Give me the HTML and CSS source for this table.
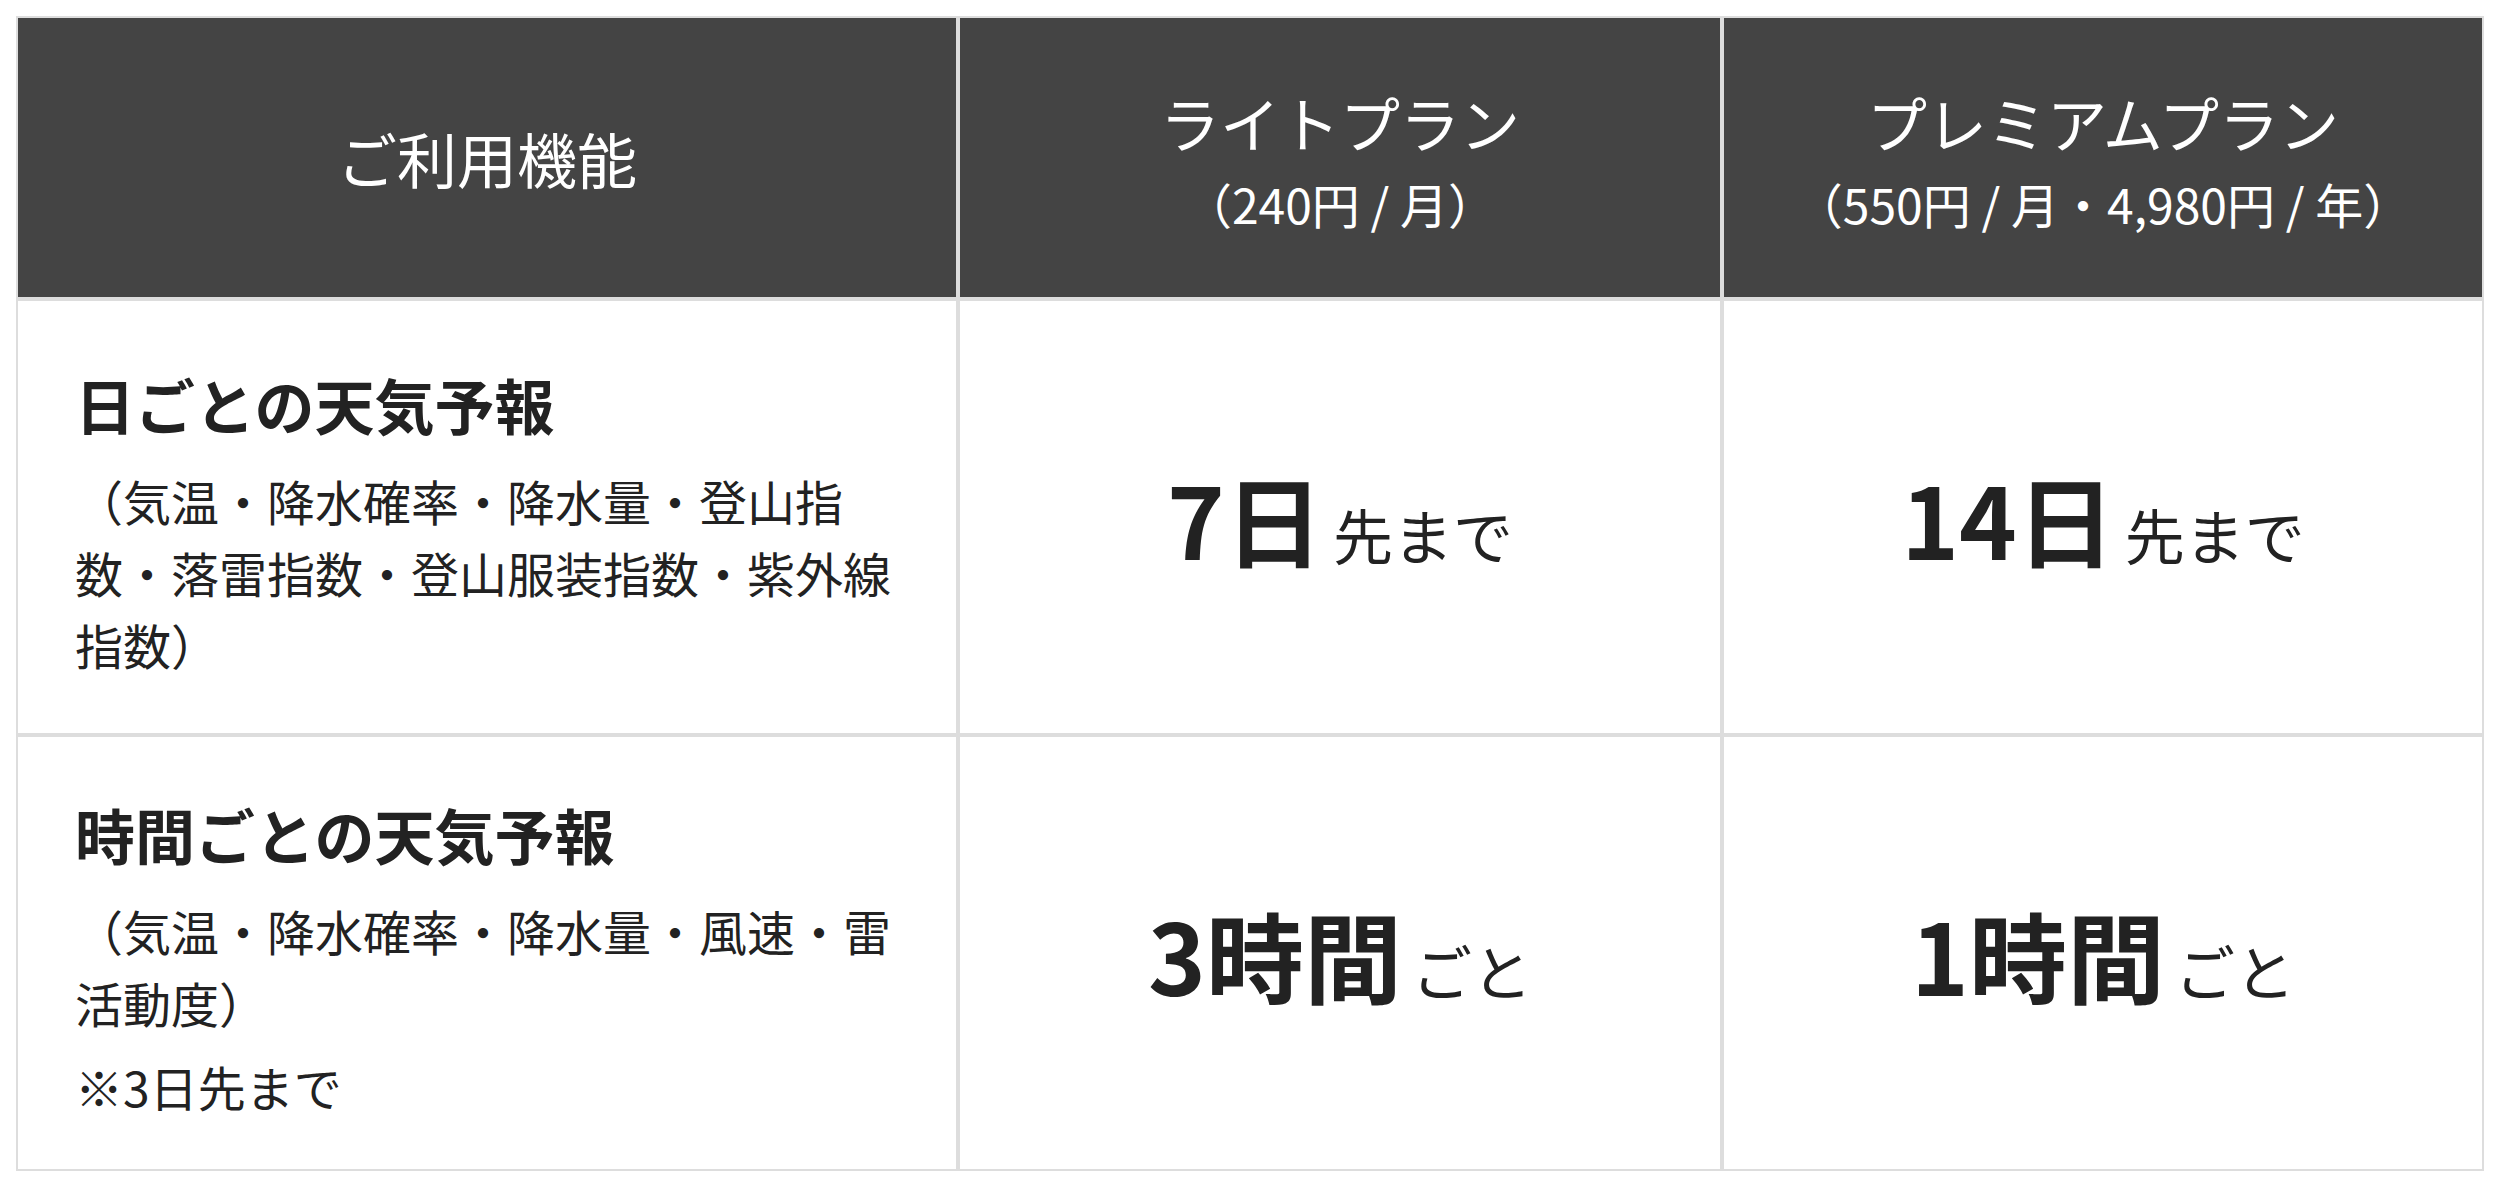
FILE: index.html
```html
<!DOCTYPE html>
<html lang="ja">
<head>
<meta charset="utf-8">
<title>プラン比較</title>
<link rel="stylesheet" href="styles.css">
</head>
<body>
<div class="page">
  <div class="plan-table">
    <div class="cell head">
      <div class="head-title">ご利用機能</div>
    </div>
    <div class="cell head">
      <div class="head-title">ライトプラン</div>
      <div class="head-price">（240円 / 月）</div>
    </div>
    <div class="cell head">
      <div class="head-title">プレミアムプラン</div>
      <div class="head-price">（550円 / 月・4,980円 / 年）</div>
    </div>

    <div class="cell feature">
      <div class="feature-title">日ごとの天気予報</div>
      <p class="feature-desc">（気温・降水確率・降水量・登山指数・落雷指数・登山服装指数・紫外線指数）</p>
    </div>
    <div class="cell value">
      <span class="value-big">7日</span><span class="value-small">先まで</span>
    </div>
    <div class="cell value">
      <span class="value-big">14日</span><span class="value-small">先まで</span>
    </div>

    <div class="cell feature">
      <div class="feature-title">時間ごとの天気予報</div>
      <p class="feature-desc">（気温・降水確率・降水量・風速・雷活動度）</p>
      <p class="feature-note">※3日先まで</p>
    </div>
    <div class="cell value">
      <span class="value-big">3時間</span><span class="value-small">ごと</span>
    </div>
    <div class="cell value">
      <span class="value-big">1時間</span><span class="value-small">ごと</span>
    </div>
  </div>
</div>
</body>
</html>
```

FILE: styles.css
```css
html, body {
  margin: 0;
  padding: 0;
  background: #ffffff;
}

body {
  font-family: "Noto Sans CJK JP", "Noto Sans", sans-serif;
  color: #222222;
}

.page {
  padding: 16px;
}

.plan-table {
  display: grid;
  grid-template-columns: 942px 764px 762px;
  grid-template-rows: 283px 436px 436px;
}

.cell {
  box-sizing: border-box;
  border: 2px solid #dddddd;
}

.head {
  background: #444444;
  color: #ffffff;
  display: flex;
  flex-direction: column;
  align-items: center;
  justify-content: center;
  text-align: center;
}

.head-title {
  font-size: 60px;
  line-height: 1.5;
  font-weight: 400;
}

.head-price {
  font-size: 48px;
  line-height: 1.5;
  margin-top: 0;
}

.feature {
  display: flex;
  flex-direction: column;
  justify-content: center;
  padding: 0 57px;
}

.feature-title {
  font-size: 60px;
  font-weight: 700;
  line-height: 100px;
}

.feature-desc,
.feature-note {
  font-size: 48px;
  line-height: 1.5;
  margin: 10px 0 0;
}

.feature-note {
  margin-top: 12px;
}

.value {
  display: flex;
  align-items: baseline;
  justify-content: center;
  align-content: center;
  flex-wrap: wrap;
}

.value-big {
  font-size: 98px;
  font-weight: 700;
}

.value-small {
  font-size: 60px;
  margin-left: 10px;
}
```
